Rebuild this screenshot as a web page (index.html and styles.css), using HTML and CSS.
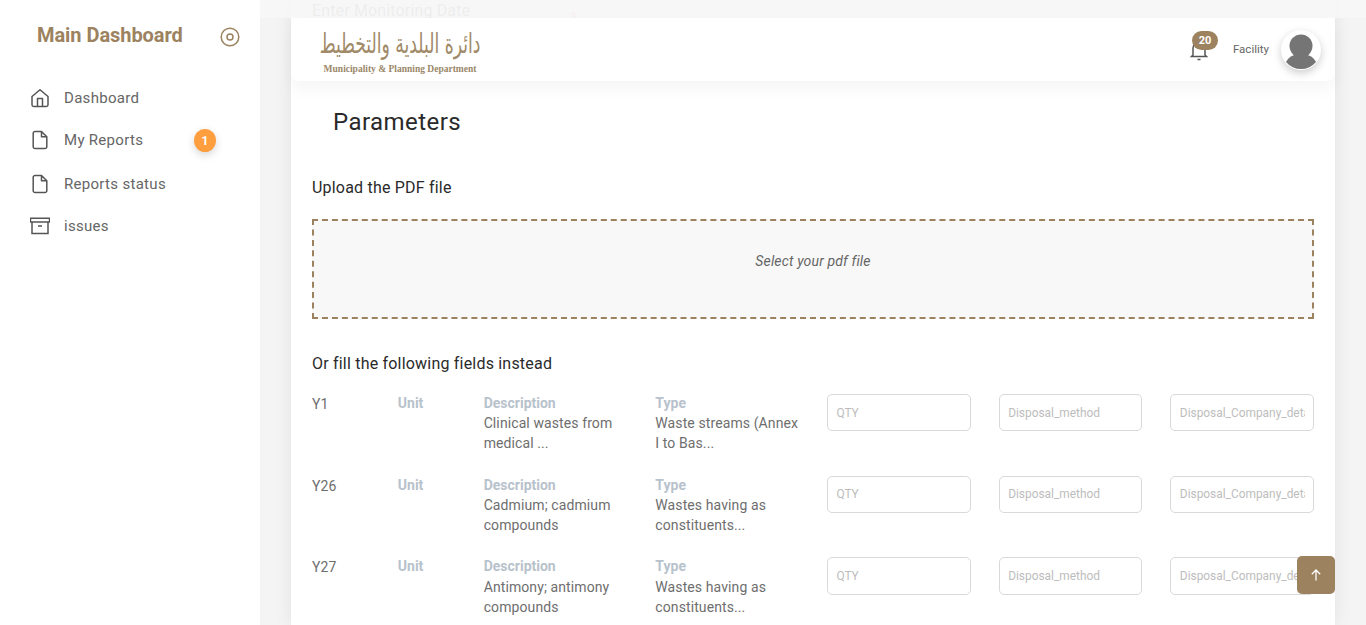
FILE: index.html
```html
<!DOCTYPE html>
<html lang="en">
<head>
<meta charset="utf-8">
<title>Parameters</title>
<link rel="stylesheet" href="styles.css">
</head>
<body>
<div class="app">
  <aside class="sidebar">
    <div class="brand">
      <span class="brand-title">Main Dashboard</span>
      <svg class="brand-icon" viewBox="0 0 20 20" width="20" height="20"><circle cx="10" cy="10" r="8.8" fill="none" stroke="#9c825f" stroke-width="1.5"/><circle cx="10" cy="10" r="3" fill="none" stroke="#9c825f" stroke-width="1.5"/></svg>
    </div>
    <nav class="nav">
      <a class="nav-item nav-a">
        <svg class="nav-icon" viewBox="0 0 20 20" width="20" height="20"><path d="M2 8.500 10 1.800l8 6.700v8.300a1.700 1.700 0 0 1-1.700 1.700H3.700A1.700 1.700 0 0 1 2 16.800z M7.500 18.500v-8h5v8" fill="none" stroke="#555" stroke-width="1.500" stroke-linejoin="round"/></svg>
        <span>Dashboard</span>
      </a>
      <a class="nav-item nav-b">
        <svg class="nav-icon" viewBox="0 0 20 20" width="20" height="20"><path d="M11.500 1.500H5A1.800 1.800 0 0 0 3.200 3.300v13.400A1.800 1.800 0 0 0 5 18.500h10a1.800 1.800 0 0 0 1.800-1.800V6.800zM11.500 1.500v5.300h5.300" fill="none" stroke="#555" stroke-width="1.500" stroke-linejoin="round"/></svg>
        <span>My Reports</span>
        <span class="count">1</span>
      </a>
      <a class="nav-item nav-c">
        <svg class="nav-icon" viewBox="0 0 20 20" width="20" height="20"><path d="M11.500 1.500H5A1.800 1.800 0 0 0 3.200 3.300v13.400A1.800 1.800 0 0 0 5 18.500h10a1.800 1.800 0 0 0 1.800-1.800V6.800zM11.500 1.500v5.300h5.300" fill="none" stroke="#555" stroke-width="1.500" stroke-linejoin="round"/></svg>
        <span>Reports status</span>
      </a>
      <a class="nav-item nav-d">
        <svg class="nav-icon" viewBox="0 0 20 20" width="20" height="20"><path d="M.500 2.200h19v3.800H.500zM2 6v11.500h16V6M8 10h4" fill="none" stroke="#555" stroke-width="1.500"/></svg>
        <span>issues</span>
      </a>
    </nav>
  </aside>

  <main class="main">
    <section class="card">
      <p class="ghost-line"><span>Enter Monitoring Date</span><span class="ghost-star">*</span></p>
      <h1 class="title">Parameters</h1>
      <h2 class="subtitle">Upload the PDF file</h2>
      <div class="dropzone"><em>Select your pdf file</em></div>
      <h2 class="subtitle subtitle-b">Or fill the following fields instead</h2>

      <div class="row">
        <div class="code">Y1</div>
        <div class="unit"><b>Unit</b></div>
        <div class="wide"><b>Description</b>Clinical wastes from medical ...</div>
        <div class="wide"><b>Type</b>Waste streams (Annex I to Bas...</div>
        <input class="wide field" placeholder="QTY">
        <input class="wide field" placeholder="Disposal_method">
        <input class="wide field" placeholder="Disposal_Company_details">
      </div>
      <div class="row">
        <div class="code">Y26</div>
        <div class="unit"><b>Unit</b></div>
        <div class="wide"><b>Description</b>Cadmium; cadmium compounds</div>
        <div class="wide"><b>Type</b>Wastes having as constituents...</div>
        <input class="wide field" placeholder="QTY">
        <input class="wide field" placeholder="Disposal_method">
        <input class="wide field" placeholder="Disposal_Company_details">
      </div>
      <div class="row">
        <div class="code">Y27</div>
        <div class="unit"><b>Unit</b></div>
        <div class="wide"><b>Description</b>Antimony; antimony compounds</div>
        <div class="wide"><b>Type</b>Wastes having as constituents...</div>
        <input class="wide field" placeholder="QTY">
        <input class="wide field" placeholder="Disposal_method">
        <input class="wide field" placeholder="Disposal_Company_details">
      </div>
    </section>
  </main>
</div>

<div class="veil"></div>
<header class="topbar">
  <div class="logo">
    <span class="logo-ar" lang="ar" dir="rtl">دائرة البلدية والتخطيط</span>
    <span class="logo-en">Municipality &amp; Planning Department</span>
  </div>
  <div class="top-right">
    <div class="bell">
      <svg viewBox="0 0 20 22" width="20" height="22"><path d="M4 16V9a6 6 0 0 1 12 0v7l1.500 1.500h-15zM8.500 20.500h3" fill="none" stroke="#555" stroke-width="1.500"/></svg>
      <span class="bell-count">20</span>
    </div>
    <span class="role">Facility</span>
    <div class="avatar">
      <svg viewBox="0 0 40 40" width="40" height="40"><circle cx="20" cy="16" r="11.500" fill="#757575"/><path d="M5 32c3-6 9-8 15-8s12 2 15 8a19.500 19.500 0 0 1-30 0z" fill="#757575"/></svg>
    </div>
  </div>
</header>
<button class="to-top" type="button" aria-label="Back to top">
  <svg viewBox="0 0 12 12" width="12" height="12"><path d="M6 11.500V1M1.800 5.200 6 1l4.200 4.200" fill="none" stroke="#fff" stroke-width="1.300"/></svg>
</button>
</body>
</html>
```
FILE: styles.css
```css
* { box-sizing: border-box; }
html, body { margin: 0; height: 100%; overflow: hidden; }
body { font-family: Roboto, "Noto Sans", sans-serif; background: #f4f4f4; color: #666; }
.app { display: flex; height: 625px; overflow: hidden; }

.sidebar { width: 260px; flex: none; background: #fff; padding: 22px 0 0 30px; }
.brand { display: flex; align-items: center; padding-left: 7px; height: 29px; }
.brand-title { font-size: 20px; font-weight: 700; color: #9c825f; line-height: 26px; width: 183px; letter-spacing: -.05px; position: relative; top: -2px; }
.brand-icon { flex: none; }
.nav { margin-top: 26px; display: flex; flex-direction: column; }
.nav-item { display: flex; align-items: center; gap: 14px; height: 42px; font-size: 15px; letter-spacing: .3px; color: #666; position: relative; }
.nav-c { margin-top: 2px; }
.nav-icon { flex: none; }
.count { position: absolute; left: 164px; top: 10px; width: 22px; height: 23px; border-radius: 50%; background: #ff9e3e; color: #fff; font-size: 12px; font-weight: 700; letter-spacing: 0; display: flex; align-items: center; justify-content: center; box-shadow: 0 3px 8px rgba(0,0,0,.16); }

.main { flex: 1; min-width: 0; padding: 0 31px; }
.card { background: #fff; height: 625px; padding: 0 21px; box-shadow: 0 0 16px rgba(0,0,0,.08); overflow: hidden; }
.ghost-line { margin: 0; height: 104px; font-size: 16px; line-height: 22px; letter-spacing: .15px; color: #555; display: flex; }
.ghost-star { margin: 7px 0 0 100px; color: #e88; }
.title { margin: 0 0 0 21px; font-size: 24px; font-weight: 400; line-height: 36px; letter-spacing: .45px; color: #2a2a2a; }
.subtitle { margin: 38px 0 0; font-size: 16px; font-weight: 400; line-height: 20px; color: #2a2a2a; letter-spacing: .2px; }
.subtitle-b { margin-top: 35px; }
.dropzone { margin-top: 21px; height: 100px; border: 2px dashed #9c825f; background: #f8f8f8; display: flex; justify-content: center; padding-top: 30px; font-size: 14px; line-height: 20px; letter-spacing: .15px; color: #666; }
.row { display: grid; grid-template-columns: repeat(12, 1fr); column-gap: 28px; margin-top: 19px; height: 70.7px; font-size: 14px; line-height: 20px; letter-spacing: .1px; color: #6e6e6e; }
.row + .row { margin-top: 11px; }
.row b { display: block; font-weight: 700; line-height: 20.300px; color: #b8c2cc; letter-spacing: 0; }
.code, .unit { grid-column: span 1; }
.code { margin-top: 1px; }
.wide { grid-column: span 2; }
.field { height: 37.300px; width: 100%; min-width: 0; margin-top: 1px; border: 1px solid #d9d9d9; border-radius: 5px; padding: 0 8px 0 8.500px; font-family: inherit; font-size: 11.900px; background: #fff; outline: none; }
.field::placeholder { color: #bdbdbd; opacity: 1; }

.veil { position: absolute; left: 260px; right: 0; top: 0; height: 18px; background: rgba(247,247,247,.94); }
.topbar { position: absolute; left: 291px; top: 18px; width: 1044px; height: 63px; background: #fff; border-radius: 8px; box-shadow: 0 8px 16px rgba(0,0,0,.04); display: flex; align-items: center; justify-content: space-between; padding: 0 14px 0 28px; }
.logo { display: flex; flex-direction: column; align-items: center; width: 162px; }
.logo-ar { font-family: "DejaVu Sans", serif; font-size: 17.200px; line-height: 38px; color: #a08a68; white-space: nowrap; transform: translateY(-2px) scaleY(1.6); }
.logo-en { font-family: "Liberation Serif", serif; font-weight: 700; font-size: 9.500px; line-height: 10px; color: #9a8769; white-space: nowrap; }
.top-right { display: flex; align-items: center; }
.bell { position: relative; width: 20px; height: 22px; margin-right: 24px; }
.bell-count { position: absolute; left: 3px; top: -8px; width: 26px; height: 19px; border-radius: 10px; background: #9c825f; color: #fff; font-size: 11px; font-weight: 700; display: flex; align-items: center; justify-content: center; }
.role { font-size: 11.500px; color: #666; margin: 0 12px 2px 0; }
.avatar { width: 40px; height: 40px; border-radius: 50%; background: #fff; overflow: hidden; box-shadow: 0 3px 8px rgba(0,0,0,.2); }
.to-top { position: absolute; left: 1297px; top: 556px; width: 38px; height: 38px; padding: 0; border: 0; border-radius: 5px; background: #9c825f; display: flex; align-items: center; justify-content: center; }
```
